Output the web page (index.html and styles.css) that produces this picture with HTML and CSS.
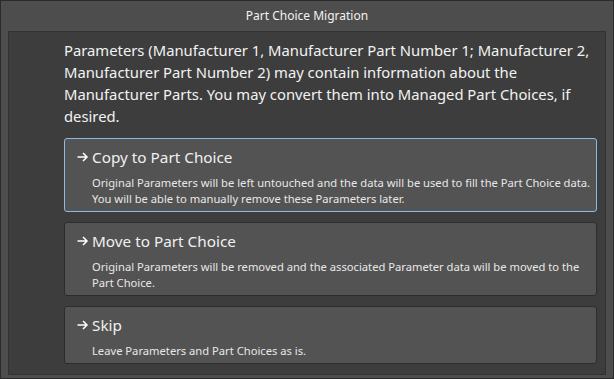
FILE: index.html
```html
<!DOCTYPE html>
<html lang="en">
<head>
  <meta charset="UTF-8">
  <title>Part Choice Migration</title>
  <link rel="stylesheet" href="styles.css">
</head>
<body>
  <div class="window">
    <div class="titlebar">Part Choice Migration</div>
    <div class="panel">
      <p class="intro">Parameters (Manufacturer 1, Manufacturer Part Number 1; Manufacturer 2, Manufacturer Part Number 2) may contain information about the Manufacturer Parts. You may convert them into Managed Part Choices, if desired.</p>

      <div class="option selected">
        <div class="option-title">
          <svg class="arrow" width="15" height="12" viewBox="0 0 15 12"><path d="M0.5 6H10M6 2L10 6L6 10" fill="none" stroke="#fff" stroke-width="1.5"/></svg>
          Copy to Part Choice
        </div>
        <div class="option-desc">Original Parameters will be left untouched and the data will be used to fill the Part Choice data.<br>You will be able to manually remove these Parameters later.</div>
      </div>

      <div class="option">
        <div class="option-title">
          <svg class="arrow" width="15" height="12" viewBox="0 0 15 12"><path d="M0.5 6H10M6 2L10 6L6 10" fill="none" stroke="#fff" stroke-width="1.5"/></svg>
          Move to Part Choice
        </div>
        <div class="option-desc">Original Parameters will be removed and the associated Parameter data will be moved to the<br>Part Choice.</div>
      </div>

      <div class="option">
        <div class="option-title">
          <svg class="arrow" width="15" height="12" viewBox="0 0 15 12"><path d="M0.5 6H10M6 2L10 6L6 10" fill="none" stroke="#fff" stroke-width="1.5"/></svg>
          Skip
        </div>
        <div class="option-desc">Leave Parameters and Part Choices as is.</div>
      </div>
    </div>
  </div>
</body>
</html>
```

FILE: styles.css
```css
* {
  box-sizing: border-box;
}
html, body {
  margin: 0;
  height: 100%;
  background: #4d4d4d;
  font-family: 'Noto Sans', 'Open Sans', sans-serif;
}
.window {
  width: 614px;
  height: 379px;
  border: 1px solid #2a2a2a;
  background: #4d4d4d;
  display: flex;
  flex-direction: column;
}
.titlebar {
  height: 29px;
  line-height: 29px;
  text-align: center;
  font-size: 12px;
  color: #f2f2f2;
}
.panel {
  margin: 1px 7px 7px 7px;
  flex: 1;
  background: #3d3d3d;
  border: 1px solid #323232;
  padding: 7px 8px 0 55px;
}
.intro {
  margin: 0 0 11px 0;
  font-size: 14.8px;
  line-height: 22px;
  color: #f2f2f2;
}
.option {
  background: #535353;
  border: 1px solid #2c2c2c;
  border-radius: 3px;
  padding: 7px 4px 4px 12px;
  margin-bottom: 10px;
}
.option.selected {
  border-color: #8fb8e4;
}
.option-title {
  font-size: 15.3px;
  line-height: 22px;
  color: #f0f0f0;
  display: flex;
  align-items: center;
}
.arrow {
  flex: none;
}
.option-desc {
  margin-top: 7px;
  padding-left: 15px;
  font-size: 11.2px;
  line-height: 16px;
  color: #e8e8e8;
  white-space: nowrap;
}
```
